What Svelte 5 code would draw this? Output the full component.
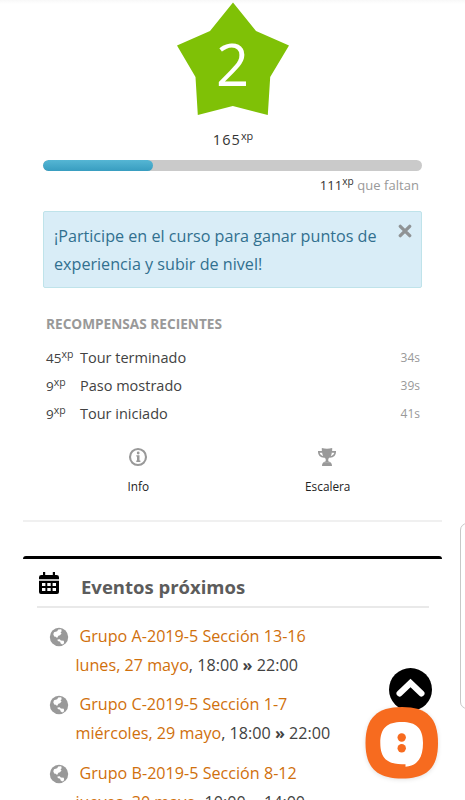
<script>
  const level = 2;
  const xp = 165;
  const remaining = 111;
  const progress = 28.9;

  const rewards = [
    { xp: 45, name: "Tour terminado", ago: "34s" },
    { xp: 9, name: "Paso mostrado", ago: "39s" },
    { xp: 9, name: "Tour iniciado", ago: "41s" },
  ];

  const events = [
    { title: "Grupo A-2019-5 Sección 13-16", date: "lunes, 27 mayo", from: "18:00", to: "22:00" },
    { title: "Grupo C-2019-5 Sección 1-7", date: "miércoles, 29 mayo", from: "18:00", to: "22:00" },
    { title: "Grupo B-2019-5 Sección 8-12", date: "jueves, 30 mayo", from: "10:00", to: "14:00" },
  ];

  let showNotice = $state(true);
</script>

<div class="page">
  <section class="level-block">
    <div class="star">
      <svg width="114" height="114" viewBox="0 0 114 114">
        <path d="M57 0.5 80 29 113 43.5 94.2 75 91.8 113 56.8 104 21.8 113 19.5 75 1 43.5 34 29Z" fill="#7fc106" />
      </svg>
      <span class="level">{level}</span>
    </div>
    <div class="total">{xp}<sup>xp</sup></div>
    <div class="bar"><div class="bar-fill" style="width: {progress}%"></div></div>
    <div class="remaining"><b>{remaining}<sup>xp</sup></b> que faltan</div>

    {#if showNotice}
      <div class="notice">
        <p>¡Participe en el curso para ganar puntos de experiencia y subir de nivel!</p>
        <button class="close" aria-label="Cerrar" onclick={() => (showNotice = false)}>
          <svg width="14" height="14" viewBox="0 0 14 14"><path d="M2.3 2.3 11.7 11.7M11.7 2.3 2.3 11.7" stroke="#8f9395" stroke-width="3.3" stroke-linecap="round" /></svg>
        </button>
      </div>
    {/if}

    <h5>Recompensas recientes</h5>
    <ul class="rewards">
      {#each rewards as r}
        <li>
          <span class="points">{r.xp}<sup>xp</sup></span>
          <span class="name">{r.name}</span>
          <span class="ago">{r.ago}</span>
        </li>
      {/each}
    </ul>

    <nav>
      <div class="nav-item">
        <svg width="20" height="20" viewBox="0 0 20 20" fill="#999">
          <circle cx="10" cy="10" r="8" fill="none" stroke="#999" stroke-width="2.1" />
          <circle cx="10.2" cy="6" r="1.4" />
          <path d="M8.3 8.2h3.2v5.4h.9V15H8.3v-1.4h.7V9.6h-.7z" />
        </svg>
        <span>Info</span>
      </div>
      <div class="nav-item">
        <svg width="20" height="20" viewBox="0 0 20 20">
          <path d="M5 4.9H1.8C1.8 7.5 4 9.5 7.2 10M15 4.9h3.2c0 2.6-2.2 4.6-5.4 5.1" fill="none" stroke="#999" stroke-width="1.6" />
          <path d="M4.8 1Q10 2.6 15.2 1C15.3 6.5 14.2 9.7 11.3 11.8V14.2C14 14.8 15 16.4 15 19H5C5 16.4 6 14.8 8.7 14.2V11.8C5.8 9.7 4.7 6.5 4.8 1Z" fill="#999" />
          <path d="M6.5 15.6h7" stroke="#bbb" stroke-width=".5" />
        </svg>
        <span>Escalera</span>
      </div>
    </nav>
  </section>

  <section class="events">
    <header>
      <svg width="22" height="24" viewBox="0 0 22 24">
        <path d="M5 1h2.2v3h7.6V1H17v3h1.5Q21 4 21 6.3V8.3H1V6.3Q1 4 3.5 4H5ZM1 9.7H21V21Q21 23 19 23H3Q1 23 1 21Z" fill="#000" />
        <path d="M4 12h3.4v3H4zM9.3 12h3.4v3H9.3zM14.6 12H18v3h-3.4zM4 17h3.4v3H4zM9.3 17h3.4v3H9.3zM14.6 17H18v3h-3.4z" fill="#fff" />
      </svg>
      <h2>Eventos próximos</h2>
    </header>
    {#each events as e}
      <article>
        <svg width="20" height="20" viewBox="0 0 20 20">
          <circle cx="10" cy="10" r="9.2" fill="#999" />
          <path d="M5 5.2 8.2 4.2 9.2 2.5 12.2 2.3 12.7 4.2 11.5 5.2 12.5 6.4 11 8.2 9.4 8.8 8.1 11 6.7 9.7 5.2 9.5 4.3 7.2ZM8.4 12.4 10.8 12.2 11.8 13.5 14.8 13.8 15.2 16.3 13.2 17.4 11.5 16.3 11.2 14.7 8.8 14Z" fill="#fff" />
        </svg>
        <div class="event-text">
          <a href="#event">{e.title}</a>
          <div class="when"><a href="#day">{e.date}</a>, {e.from} <strong>»</strong> {e.to}</div>
        </div>
      </article>
    {/each}
  </section>

  <div class="drawer"></div>
  <button class="to-top" aria-label="Subir">
    <svg width="43" height="43" viewBox="0 0 43 43"><circle cx="21.5" cy="21.5" r="21.5" /><path d="M10.5 25.5 21.5 15 32.5 25.5" fill="none" stroke="#fff" stroke-width="6" stroke-linecap="round" /></svg>
  </button>
  <button class="chat" aria-label="Chat">
    <svg width="74" height="72" viewBox="0 0 74 72">
      <path d="M37 0C62 0 73 11 73 36S62 71.5 37 71.5 .5 61 .5 36 12 0 37 0Z" fill="#f76b1f" />
      <path d="M37 15C51 15 58 21 58 36C58 50 53 59 40.5 59.7V57.2H37C22 57 15.3 51 15.3 36S22 15 37 15Z" fill="#fff" />
      <circle cx="36.7" cy="30.5" r="4.2" fill="#f76b1f" />
      <circle cx="36.7" cy="41.3" r="4.2" fill="#f76b1f" />
    </svg>
  </button>
</div>

<style>
  :global(body) { margin: 0; background: #fff; }
  .page { position: relative; width: 465px; height: 800px; box-sizing: border-box; padding: 0 23px; overflow: hidden; font-family: "Open Sans", sans-serif; color: #424242; background: linear-gradient(#f8f8f8, #fff 4px); }
  sup { font-size: 0.78em; line-height: 0; vertical-align: 0.46em; letter-spacing: 0; }
  button { border: 0; padding: 0; background: none; cursor: pointer; }
  svg { display: block; flex: none; }
  a { color: #d0700c; text-decoration: none; }

  .level-block { height: 522px; padding: 2px 20px 0; box-sizing: border-box; border-bottom: 2px solid #f0f0f0; }
  .star { display: grid; justify-content: center; height: 114px; }
  .star > * { grid-area: 1 / 1; }
  .level { color: #fff; font-size: 58px; font-weight: 400; line-height: 123px; text-align: center; }
  .total { margin-top: 12px; padding-left: 1px; height: 24px; line-height: 24px; font-size: 14.5px; letter-spacing: 1.1px; font-weight: 400; color: #333; text-align: center; }
  .total sup { font-size: 0.75em; }
  .bar { margin-top: 8px; height: 11px; border-radius: 6px; background: #cacaca; overflow: hidden; }
  .bar-fill { height: 100%; border-radius: 6px; background: linear-gradient(#55b6d4, #389dc0); }
  .remaining { margin-top: 3px; padding-right: 3px; height: 22px; line-height: 22px; font-size: 13px; letter-spacing: 0.05px; color: #999; text-align: right; }
  .remaining b { font-weight: 400; color: #333; }

  .notice { display: flex; justify-content: space-between; margin-top: 15px; height: 77px; box-sizing: border-box; padding: 10px 9px 0 10px; border: 1px solid #bfe3ea; border-radius: 2px; background: #d9edf7; }
  .notice p { margin: 0; width: 335px; font-size: 16.15px; line-height: 28px; color: #31708f; }
  .close { align-self: flex-start; margin-top: 2px; }

  h5 { margin: 26px 0 0 3px; line-height: 20px; font-size: 13.65px; font-weight: 700; text-transform: uppercase; color: #999; }
  .rewards { list-style: none; margin: 10px 0 0; padding: 0 2px 0 3px; }
  .rewards li { display: flex; height: 28px; line-height: 28px; font-size: 14.5px; }
  .points { width: 34px; font-size: 13.5px; }
  .name { flex: 1; }
  .ago { font-size: 12px; color: #999; }

  nav { display: flex; margin-top: 19px; }
  .nav-item { flex: 1; display: flex; flex-direction: column; align-items: center; font-size: 11.8px; line-height: 18px; color: #222; }
  .nav-item span { margin: 10px 0 0 1px; }

  .events { width: 419px; margin-top: 34px; border-top: 3px solid #000; border-radius: 3px 3px 0 0; }
  header { display: flex; align-items: flex-start; margin: 0 13px 0 14px; height: 49px; box-sizing: border-box; padding-top: 12px; border-bottom: 2px solid #e9e9e9; }
  header svg { margin-left: 1px; }
  h2 { margin: 3px 0 0 21px; font-size: 18.5px; line-height: 26px; font-weight: 700; color: #5c5c5c; }
  article { display: flex; height: 68.3px; padding-left: 26px; }
  article svg { margin-top: 19px; }
  .event-text { padding-top: 14px; font-size: 16.15px; line-height: 29px; white-space: nowrap; }
  .event-text > a { display: block; margin-left: 10.5px; }
  .when { margin-left: 6.5px; }

  .drawer { position: absolute; left: 460px; top: 523px; width: 30px; height: 184px; border: 1px solid #c8c8c8; border-radius: 7px; background: #fff; }
  .to-top { position: absolute; left: 389px; top: 668px; }
  .chat { position: absolute; left: 365px; top: 707px; filter: drop-shadow(0 1px 2px rgba(0, 0, 0, 0.12)); }
</style>
